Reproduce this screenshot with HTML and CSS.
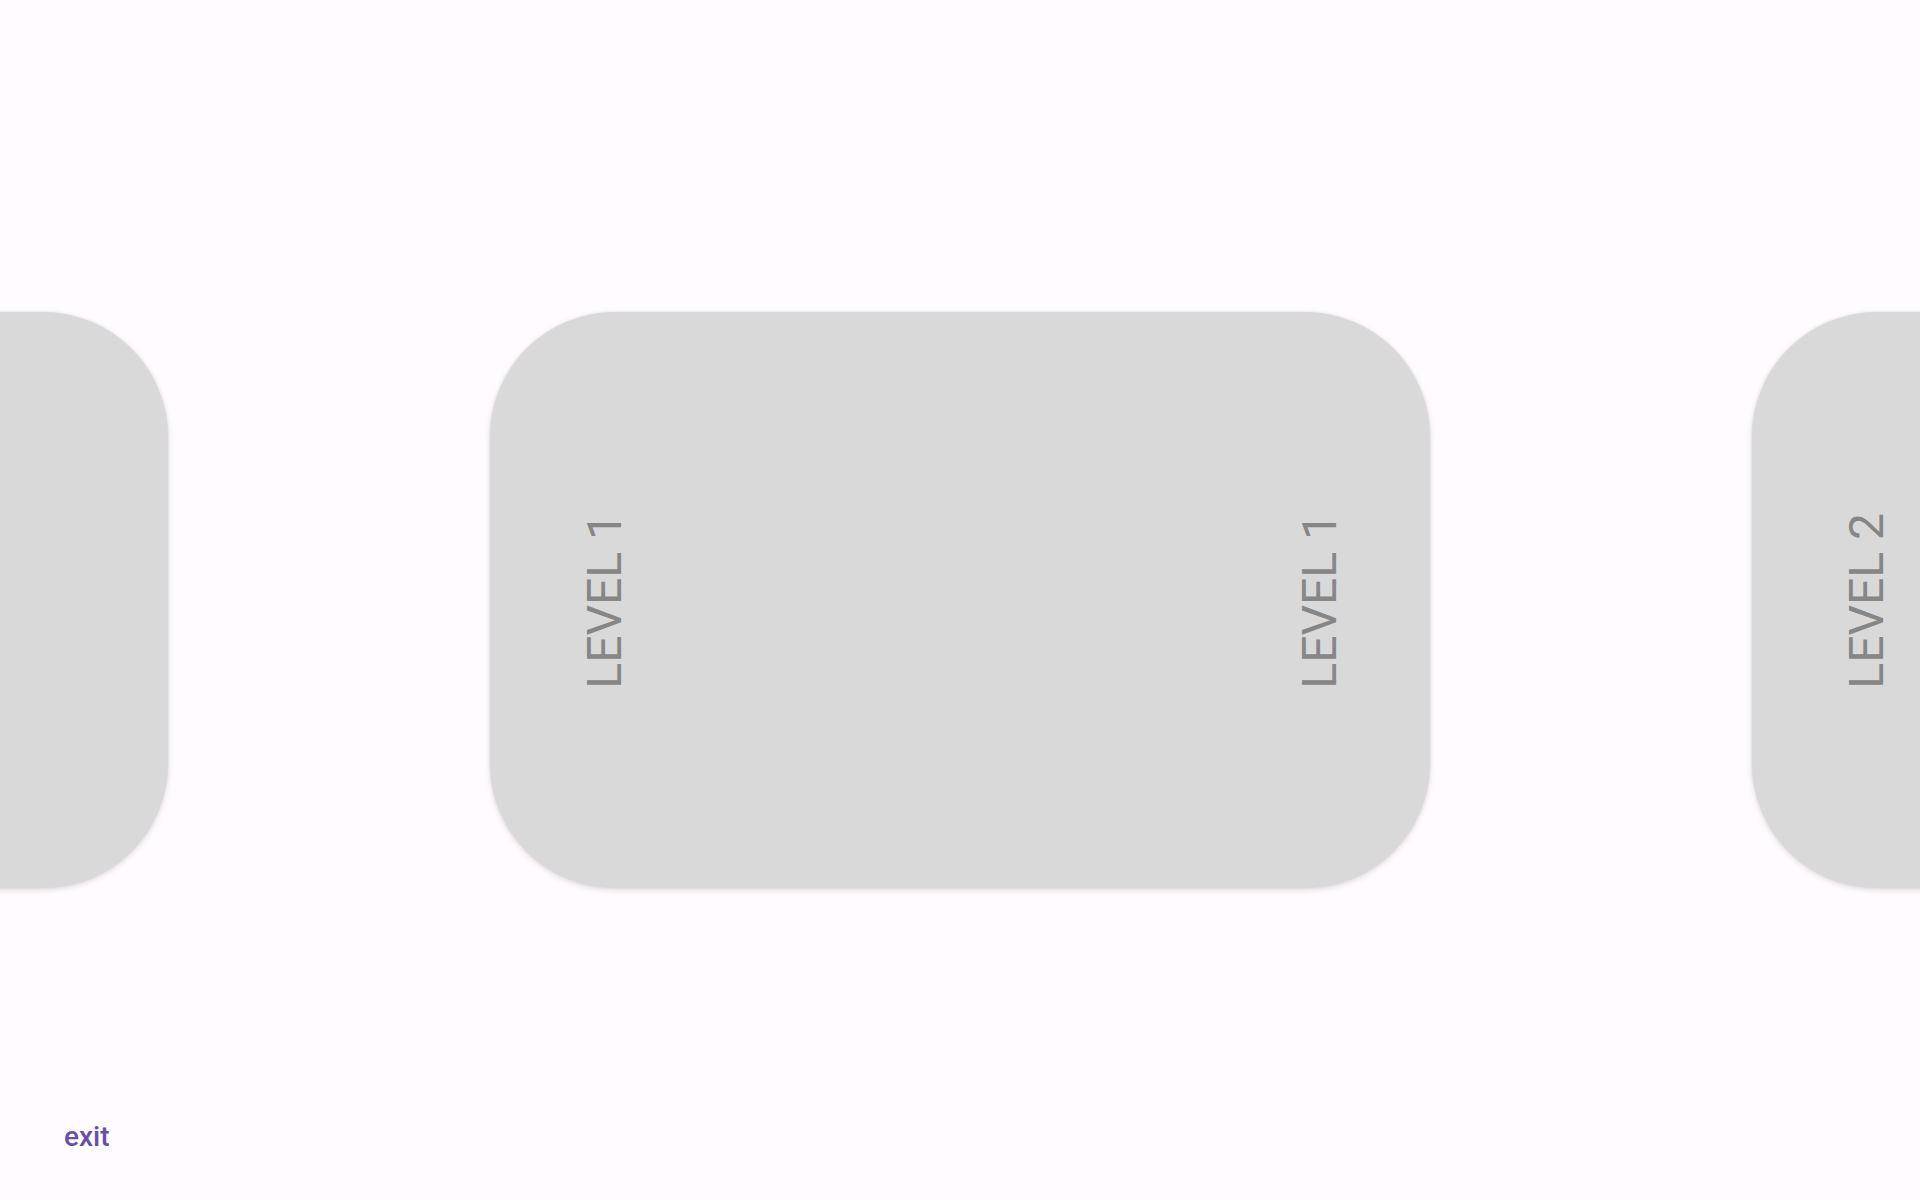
FILE: index.html
```html
<!DOCTYPE html>
<html lang="en">
<head>
<meta charset="utf-8">
<title>Levels</title>
<link rel="stylesheet" href="styles.css">
</head>
<body>
<div class="page">
  <div class="track">
    <div class="card"></div>
    <div class="card">
      <span class="label">LEVEL 1</span>
      <span class="label">LEVEL 1</span>
    </div>
    <div class="card">
      <span class="label">LEVEL 2</span>
      <span class="label">LEVEL 2</span>
    </div>
  </div>
  <div class="footer">
    <button class="exit">exit</button>
  </div>
</div>
</body>
</html>
```
FILE: styles.css
```css
html, body {
  margin: 0;
  padding: 0;
  background: #fffbfe;
  overflow: hidden;
}
.page {
  width: 1920px;
  height: 1200px;
  display: flex;
  flex-direction: column;
  padding-top: 312px;
  box-sizing: border-box;
  font-family: Roboto, "Noto Sans", sans-serif;
}
.track {
  display: flex;
  justify-content: center;
  gap: 322px;
  height: 576px;
}
.card {
  flex: 0 0 940px;
  height: 576px;
  border-radius: 125px;
  background: #d9d9d9;
  box-shadow: 0 2px 6px rgba(0, 0, 0, 0.13), 0 0 3px rgba(0, 0, 0, 0.08);
  display: flex;
  justify-content: space-between;
  align-items: center;
  padding: 0 82px 0 87px;
  box-sizing: border-box;
}
.label {
  writing-mode: vertical-rl;
  transform: rotate(180deg);
  font-size: 48px;
  font-weight: 400;
  line-height: 56px;
  color: #868686;
  margin-top: 2px;
}
.footer {
  margin-top: 228px;
  padding-left: 52px;
}
.exit {
  background: none;
  border: none;
  padding: 4px 12px;
  font-family: Roboto, "Noto Sans", sans-serif;
  font-size: 28px;
  font-weight: 500;
  color: #6750a4;
  cursor: pointer;
}
```
